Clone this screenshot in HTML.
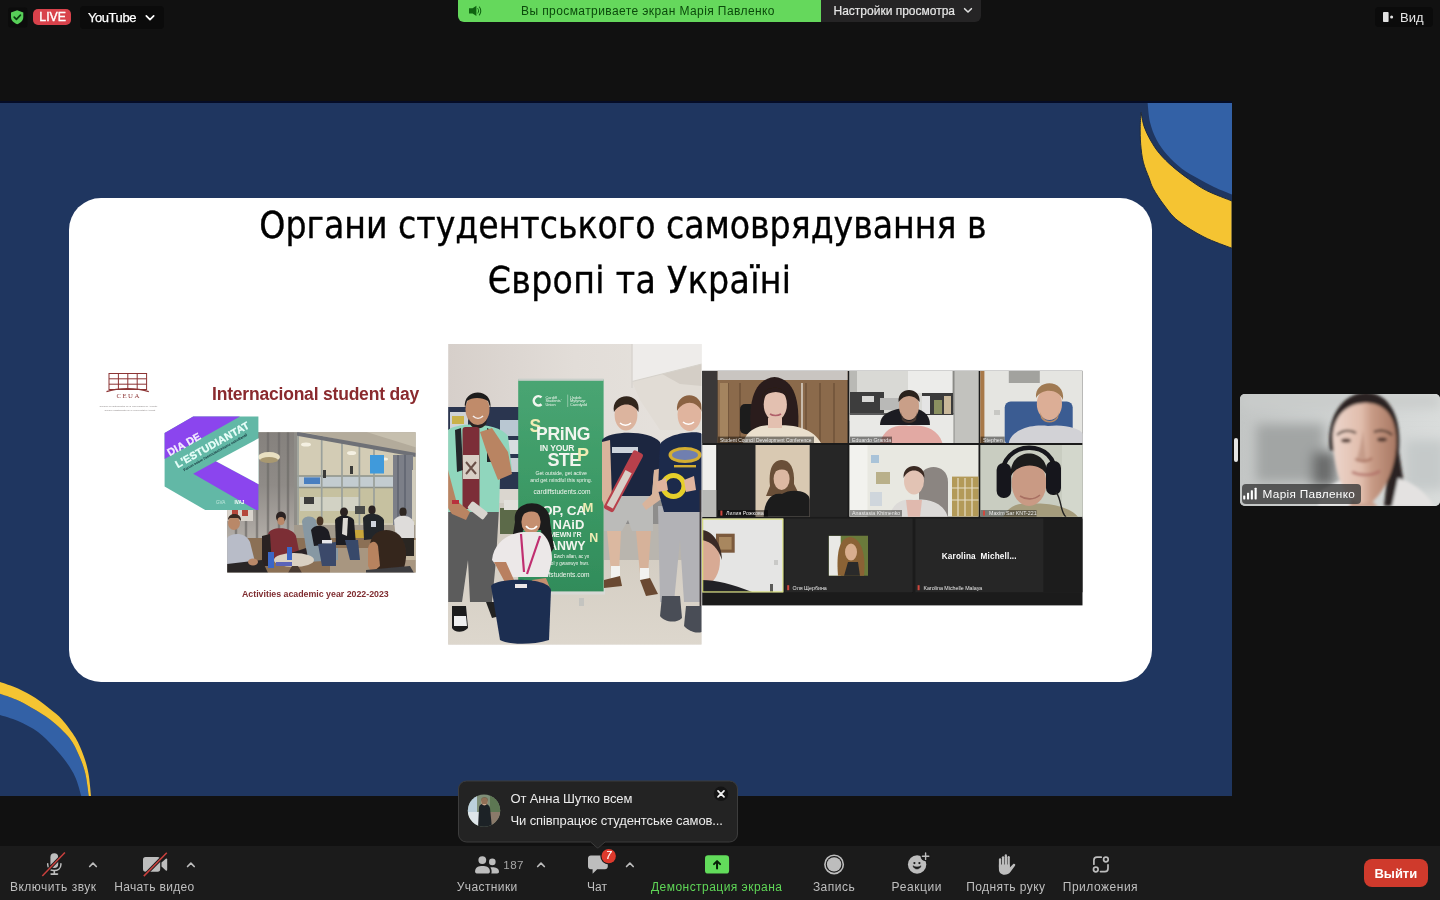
<!DOCTYPE html>
<html lang="ru">
<head>
<meta charset="utf-8">
<title>Zoom</title>
<style>
*{box-sizing:border-box;margin:0;padding:0}
html,body{width:1440px;height:900px;overflow:hidden;background:#111111}
body{position:relative;font-family:"Liberation Sans",sans-serif;color:#fff;-webkit-font-smoothing:antialiased}
.abs{position:absolute}
.t{position:absolute;white-space:nowrap;line-height:1}
/* top bar */
#live{left:33px;top:9px;width:38px;height:16px;border-radius:5px;background:#d8424b}
#ytbox{left:80px;top:6px;width:84px;height:23px;border-radius:4px;background:#0b0b0b}
#sharebar{left:458px;top:0;width:363px;height:22px;background:#65d85c;border-radius:0 0 0 6px}
#viewopt{left:821px;top:0;width:160px;height:22px;background:#252425;border-radius:0 0 6px 0}
#vidbox{left:1375px;top:6.5px;width:58px;height:20.5px;border-radius:4px;background:#0b0b0b}
/* slide */
#slide{left:0;top:103px;width:1232px;height:693px;background:#1f3660;overflow:hidden}
#card{left:69px;top:95.3px;width:1082.6px;height:484px;background:#fff;border-radius:32px}
.title{position:absolute;color:#000;font-family:"DejaVu Sans Condensed","DejaVu Sans",sans-serif;font-size:36.9px;line-height:1;white-space:nowrap;-webkit-text-stroke:.35px #000}
/* toolbar */
#toolbar{left:0;top:846px;width:1440px;height:54px;background:#1b1b1b}
.lbl{position:absolute;top:879.8px;font-size:12px;color:#bfbfbf;white-space:nowrap;line-height:14px;letter-spacing:.2px}
#leave{left:1364px;top:859px;width:64px;height:28px;border-radius:8px;background:#cf3a2c}
/* popup */
#popup{left:458px;top:781px;width:280px;height:61px;border-radius:8px;background:#232323;border:1px solid #3c3c3c}
/* participant */
#pvideo{left:1240px;top:394px;width:199.5px;height:112px;border-radius:5px;background:#c9cccb;overflow:hidden}
#pname{left:1241.7px;top:484.2px;width:119px;height:19.8px;border-radius:4px;background:rgba(58,58,58,.8)}
</style>
</head>
<body>
<div id="root" style="position:absolute;left:0;top:0;width:1440px;height:900px;will-change:transform">

<!-- ===== slide ===== -->
<div class="abs" style="left:0;top:101.4px;width:1232px;height:2px;background:#050c26"></div>
<div id="slide" class="abs">
  <svg class="abs" style="left:0;top:0" width="1232" height="693" viewBox="0 103 1232 693">
    <!-- top-right decoration -->
    <path d="M1147.6 103 C1148.0 106.2 1148.5 116.0 1150 122.2 C1151.5 128.4 1153.8 134.5 1156.7 140 C1159.6 145.5 1163.2 150.4 1167.3 155.1 C1171.4 159.8 1176.5 164.6 1181.6 168.4 C1186.6 172.2 1192.2 175.1 1197.6 178.2 C1203.0 181.3 1208.3 184.3 1214 187 C1219.7 189.7 1229.0 193.2 1232 194.5 L1232 103 Z" fill="#3361a6"/>
    <path d="M1141.1 112.4 C1141.6 114.8 1142.7 122.1 1144.2 126.7 C1145.8 131.3 1147.9 135.6 1150.4 140 C1152.9 144.4 1155.6 148.9 1159.3 153.3 C1163.0 157.8 1167.8 162.4 1172.7 166.7 C1177.6 171.0 1183.1 175.1 1188.7 179.1 C1194.3 183.1 1199.4 186.9 1206.6 190.6 C1213.8 194.2 1227.8 199.3 1232 201 L1232 248.3 C1227.3 246.4 1213.0 241.6 1204 237 C1195.0 232.4 1184.7 226.1 1178 220.8 C1171.3 215.5 1168.1 210.3 1164 205 C1159.9 199.7 1155.8 193.3 1153.3 188.8 C1150.8 184.3 1150.8 182.6 1149.1 178.2 C1147.4 173.8 1144.7 167.8 1143.3 162.2 C1141.9 156.6 1141.2 150.3 1140.7 144.4 C1140.2 138.5 1140.1 132.0 1140.2 126.7 C1140.3 121.4 1140.9 114.8 1141.1 112.4 Z" fill="#f5c432" stroke="#1e2a3e" stroke-width="1" stroke-linejoin="round"/>
    <!-- bottom-left decoration -->
    <path d="M0 693.7 C2.7 694.7 10.7 697.1 16 699.5 C21.3 701.9 26.2 704.6 32 708 C37.8 711.4 44.5 715.0 50.7 720 C56.9 725.0 64.6 731.9 69.3 737.8 C74.0 743.7 76.3 749.6 79 755.5 C81.7 761.4 83.7 766.5 85.3 773.3 C86.9 780.0 88.2 792.2 88.8 796 L81.3 796 C80.3 793.0 78.0 783.3 75.5 777.7 C73.0 772.1 70.3 767.8 66.6 762.6 C62.9 757.4 58.1 751.7 53.3 746.6 C48.5 741.5 43.9 736.3 38 732 C32.1 727.7 24.3 723.8 18 721 C11.7 718.2 3.0 716.0 0 715 Z" fill="#3361a6"/>
    <path d="M0 682 C3.0 683.1 12.1 685.8 18 688.5 C23.9 691.2 30.2 694.6 35.5 698 C40.8 701.4 45.6 705.4 50 709 C54.4 712.6 57.8 714.7 62 719.5 C66.2 724.3 71.9 731.8 75.5 737.8 C79.1 743.8 81.3 749.6 83.5 755.5 C85.7 761.4 87.2 766.5 88.4 773.3 C89.7 780.0 90.6 792.2 91 796 L88.8 796 C88.2 792.2 86.9 780.0 85.3 773.3 C83.7 766.5 81.7 761.4 79 755.5 C76.3 749.6 74.0 743.7 69.3 737.8 C64.6 731.9 56.9 725.0 50.7 720 C44.5 715.0 37.8 711.4 32 708 C26.2 704.6 21.3 701.9 16 699.5 C10.7 697.1 2.7 694.7 0 693.7 Z" fill="#f5c432"/>
  </svg>
  <div id="card" class="abs"></div>

  <!-- ===== left block: CEUA ===== -->
  <svg class="abs" style="left:95px;top:262px" width="340" height="250" viewBox="95 365 340 250">
    <defs>
      <filter id="pb" x="-5%" y="-5%" width="110%" height="110%"><feGaussianBlur stdDeviation="0.7"/></filter>
      <filter id="pb2" x="-5%" y="-5%" width="110%" height="110%"><feGaussianBlur stdDeviation="1.6"/></filter>
      <linearGradient id="curt" x1="0" y1="0" x2="0" y2="1"><stop offset="0" stop-color="#85817d"/><stop offset=".45" stop-color="#8f8b87"/><stop offset="1" stop-color="#b9b4ae"/></linearGradient>
      <clipPath id="cph1"><rect x="227.2" y="432.2" width="188.4" height="140.2"/></clipPath>
    </defs>
    <!-- CEUA building logo -->
    <g fill="none" stroke="#8c3434" stroke-width="1">
      <rect x="109" y="373.5" width="37.6" height="16"/>
      <path d="M118.4 373.5 V389.5 M127.8 373.5 V389.5 M137.2 373.5 V389.5 M109 378.8 H146.6 M109 384.2 H146.6"/>
      <path d="M106.5 391.6 C118 387.6 137 387.6 148.8 391.6" stroke-width="1.2"/>
    </g>
    <!-- photo -->
    <g clip-path="url(#cph1)">
      <rect x="227" y="432" width="189" height="141" fill="#a39a8c"/>
      <g filter="url(#pb)">
        <!-- window wall -->
        <rect x="293" y="430" width="125" height="95" fill="#cdc7b0"/>
        <rect x="296" y="436" width="98" height="40" fill="#d3ccb5"/>
        <rect x="294" y="476" width="100" height="11" fill="#c3ccd0"/>
        <rect x="294" y="487" width="100" height="36" fill="#c6c1a0"/>
        <rect x="300" y="497" width="60" height="14" fill="#d2d2c4"/>
        <path d="M296 476 H393 M296 487.5 H393" stroke="#8d9188" stroke-width="1.3"/>
        <path d="M298 436 V525 M321.7 436 V525 M342 440 V525 M359.4 444 V525 M374 448 V525" stroke="#9aa09b" stroke-width="1.7"/>
        <ellipse cx="306" cy="444.6" rx="5" ry="2" fill="#f4f0e2"/><ellipse cx="351.6" cy="453" rx="4.6" ry="2" fill="#f4f0e2"/><ellipse cx="385" cy="459" rx="3" ry="1.6" fill="#f4f0e2"/>
        <!-- ceiling + beam -->
        <path d="M293 430 H418 V456 Z" fill="#b3ab9b"/>
        <path d="M360 430 H418 V448 Z" fill="#c6bfae"/>
        <path d="M293 433 L416 455" stroke="#6e7076" stroke-width="4" fill="none"/>
        <rect x="291" y="432" width="6" height="93" fill="#8f8d88"/>
        <!-- blue sign -->
        <rect x="370" y="455" width="14" height="18.5" fill="#3f9adb"/>
        <rect x="304" y="477.4" width="16" height="6.6" fill="#4a7fc0"/>
        <!-- small dark things in window -->
        <rect x="304" y="497" width="10" height="7" fill="#3c3e3c"/>
        <rect x="355" y="506" width="10" height="8" fill="#4a4c48"/>
        <rect x="323" y="470" width="3" height="8" fill="#3a3a38"/><rect x="350" y="466" width="3" height="8" fill="#3a3a38"/>
        <!-- curtains -->
        <rect x="227" y="432" width="67" height="118" fill="url(#curt)"/>
        <path d="M236 432 V550 M246 432 V550 M257 432 V550 M268 432 V550 M279 432 V550 M288 432 V550" stroke="#6f6c69" stroke-width="2.4" opacity=".7"/>
        <rect x="393" y="455" width="20" height="70" fill="#7b7f88"/>
        <path d="M398 455 V525 M405 455 V525" stroke="#666a74" stroke-width="2"/>
        <rect x="412" y="470" width="6" height="50" fill="#d2cdbc"/>
        <!-- lamp -->
        <ellipse cx="269" cy="457" rx="11" ry="5" fill="#e9e0c2"/>
        <ellipse cx="269" cy="460" rx="9" ry="3" fill="#a89870"/>
        <!-- floor -->
        <rect x="227" y="538" width="190" height="36" fill="#8b6f55"/>
        <rect x="330" y="548" width="90" height="26" fill="#a89680"/>
        <rect x="396" y="540" width="22" height="20" fill="#c4b79f"/>
        <!-- wall bit lower-left -->
        <rect x="227" y="509" width="26" height="12" fill="#d9d4cc"/>
        <rect x="232" y="510" width="6" height="6" fill="#b4463a"/><rect x="242" y="510" width="6" height="6" fill="#b4463a"/>
        <!-- armchair -->
        <path d="M302 522 C302 516 312 514 316 520 L322 550 L338 548 L338 560 L308 562 Z" fill="#8798a3"/>
        <!-- yellow chairs -->
        <rect x="340" y="530" width="26" height="8" fill="#c9a63a"/>
        <!-- people back row -->
        <ellipse cx="344" cy="512" rx="4" ry="4.6" fill="#2a2420"/>
        <path d="M335 520 C338 514 350 514 354 520 L356 545 L336 545 Z" fill="#1f1f22"/>
        <path d="M343 518 L348 518 L347 536 L342 534 Z" fill="#dcd8d4"/>
        <path d="M345 540 L358 540 L360 560 L350 560 Z" fill="#39496b"/>
        <ellipse cx="372" cy="510" rx="3.6" ry="4.4" fill="#2a2420"/>
        <path d="M363 518 C366 512 380 512 384 520 L384 538 L364 540 Z" fill="#23252b"/>
        <rect x="371" y="521" width="5" height="6" fill="#cfd4dc"/>
        <ellipse cx="403" cy="512" rx="3.6" ry="4.4" fill="#2e2620"/>
        <path d="M394 520 C398 514 410 514 414 522 L414 540 L396 540 Z" fill="#dedcda"/>
        <path d="M396 538 L414 538 L414 556 L400 556 Z" fill="#2a2624"/>
        <!-- woman in black -->
        <ellipse cx="320" cy="521" rx="3.4" ry="4.6" fill="#4a3426"/>
        <path d="M311 530 C314 524 326 524 329 532 L332 544 L314 546 Z" fill="#1d1d20"/>
        <path d="M318 544 L336 542 L336 566 L322 566 Z" fill="#3a4a6a"/>
        <rect x="322" y="540" width="10" height="3.4" fill="#e6e6ea"/>
        <!-- red sweater man -->
        <ellipse cx="281" cy="517" rx="5" ry="5.6" fill="#2c2420"/>
        <ellipse cx="281" cy="521" rx="3.6" ry="4" fill="#b98768"/>
        <path d="M268 534 C270 526 292 526 296 536 L300 556 L270 560 Z" fill="#7b2f36"/>
        <path d="M262 536 L270 534 L272 566 L262 566 Z" fill="#2a2422"/>
        <path d="M282 556 L306 548 L308 558 L284 566 Z" fill="#2a2426"/>
        <!-- left man -->
        <ellipse cx="234" cy="523" rx="6" ry="7" fill="#b98868"/>
        <path d="M228 520 C228 512 242 512 241 521 L238 518 L230 518 Z" fill="#3a2a20"/>
        <path d="M227 538 C232 532 246 532 250 542 L256 566 L227 570 Z" fill="#b8bcc8"/>
        <path d="M227 564 L262 560 L268 573 L227 573 Z" fill="#2a2628"/>
        <ellipse cx="253" cy="562" rx="5" ry="3.4" fill="#b98868"/>
        <!-- table -->
        <ellipse cx="294" cy="560" rx="20" ry="7" fill="#d9d0c2"/>
        <path d="M292 566 L298 566 L302 573 L288 573 Z" fill="#4a3a30"/>
        <rect x="268" y="552" width="6" height="16" fill="#3b66c6"/>
        <rect x="287" y="547" width="5" height="13" fill="#3b66c6"/>
        <rect x="276" y="562" width="16" height="4" fill="#5a63b8"/>
        <!-- foreground man -->
        <path d="M370 546 C370 530 388 526 398 534 C408 542 408 560 402 573 L372 573 Z" fill="#35271f"/>
        <path d="M368 548 C370 540 376 540 378 546 L380 566 L372 573 L368 566 Z" fill="#b8835f"/>
        <path d="M366 570 L410 566 L414 573 L366 573 Z" fill="#3c3c40"/>
      </g>
    </g>
    <!-- DIA DE L'ESTUDIANTAT logo -->
    <g>
      <path d="M164.6 433 L193.2 416.6 L258.4 416.6 L258.4 509.9 L205.2 509.9 L164.6 486.4 Z" fill="#62b8a6"/>
      <path d="M164.6 433 L193.2 416.6 L240 416.6 L164.6 459 Z" fill="#8b45ee"/>
      <path d="M216 461.2 L258.4 484 L258.4 509.9 L256 509.9 L193.2 473.8 Z" fill="#8b45ee"/>
      <path d="M258.6 438.3 L258.6 484.2 L216 461.2 Z" fill="#ffffff"/>
    </g>
  </svg>

  <!-- ===== middle photo ===== -->
  <svg class="abs" style="left:447px;top:240px" width="256" height="303" viewBox="447 343 256 303">
    <defs>
      <clipPath id="cph2"><rect x="448.2" y="344" width="253.3" height="300.4"/></clipPath>
      <linearGradient id="bng" x1="0" y1="0" x2="0" y2="1"><stop offset="0" stop-color="#49a573"/><stop offset=".5" stop-color="#3d9a66"/><stop offset="1" stop-color="#318c5a"/></linearGradient>
      <linearGradient id="wallg" x1="0" y1="0" x2="1" y2="0"><stop offset="0" stop-color="#d6cfca"/><stop offset=".5" stop-color="#e2ddd8"/><stop offset="1" stop-color="#e6e2dd"/></linearGradient>
      <linearGradient id="flr" x1="0" y1="0" x2="0" y2="1"><stop offset="0" stop-color="#cfc8bd"/><stop offset="1" stop-color="#ddd7cd"/></linearGradient>
    </defs>
    <g clip-path="url(#cph2)">
      <rect x="447" y="343" width="256" height="303" fill="url(#wallg)"/>
      <g filter="url(#pb)">
        <!-- right ceiling/wall -->
        <path d="M632 344 H702 V364 L632 381.5 Z" fill="#eeecea"/>
        <path d="M632 381.5 L702 364 V430 H660 L640 400 Z" fill="#e1dcd5"/><path d="M662 374 L702 364 V386 L680 384 Z" fill="#d4cec6"/>
        <path d="M632 381.5 L702 364" stroke="#d6d2cc" stroke-width="1.2"/>
        <path d="M632 344 V388" stroke="#d8d5cf" stroke-width="1.5"/>
        <!-- floor -->
        <rect x="447" y="500" width="256" height="146" fill="url(#flr)"/>
        <rect x="447" y="486" width="256" height="30" fill="#cfcac2"/>
        <path d="M604 520 H702 V560 H604 Z" fill="#b9b5ae"/>
        <path d="M604 500 H702 V524 H604 Z" fill="#8e8d8c"/>
        <!-- notice board -->
        <rect x="448" y="407" width="73" height="82" fill="#2c344f"/>
        <rect x="450" y="412" width="18" height="28" fill="#cfd3d6"/>
        <rect x="452" y="416" width="12" height="8" fill="#c9b24a"/>
        <rect x="500" y="420" width="20" height="16" fill="#b9c7d2"/>
        <rect x="500" y="440" width="20" height="14" fill="#d8dde0"/>
        <rect x="504" y="458" width="16" height="14" fill="#c8ced4"/>
        <rect x="447" y="489" width="74" height="14" fill="#dad6cf"/>
        <!-- plants behind woman -->
        <rect x="500" y="508" width="22" height="26" fill="#5c6b4a"/>
        <rect x="504" y="500" width="16" height="10" fill="#e2e0dc"/>
        <!-- banner -->
        <rect x="548" y="588" width="57" height="6.5" fill="#d9d9d6"/>
        <rect x="518.2" y="379.4" width="85.4" height="212" fill="url(#bng)"/>
        <rect x="518.2" y="378.6" width="85.4" height="2.2" fill="#c9cfca"/>
        <rect x="579" y="598" width="5" height="8" fill="#c4c4c0"/>
        <g font-family="'Liberation Sans',sans-serif" font-weight="bold" fill="#f1f5ee">
          <path d="M541.5 397.4 A4.6 4.6 0 1 0 541.5 404.2" fill="none" stroke="#f1f5ee" stroke-width="2.6"/>
          <text font-size="3.9" font-weight="normal"><tspan x="545.4" y="398.6">Cardiff</tspan><tspan x="545.4" y="402.4">Students'</tspan><tspan x="545.4" y="406.2">Union</tspan></text>
          <rect x="567.6" y="394.6" width=".5" height="12.4" fill="#d6eadc"/>
          <text font-size="3.9" font-weight="normal"><tspan x="570" y="398.6">Undeb</tspan><tspan x="570" y="402.4">Myfyrwyr</tspan><tspan x="570" y="406.2">Caerdydd</tspan></text>
          <text x="529.6" y="432.4" font-size="17.6" fill="#f0ecb4">S</text>
          <text x="536" y="440" font-size="17.6" letter-spacing="-.3">PRiNG</text>
          <text x="539.8" y="450.6" font-size="8.5" letter-spacing="-.1">IN YOUR</text>
          <text x="547.4" y="466.4" font-size="18" letter-spacing="-.6">STE</text>
          <text x="577" y="460.6" font-size="18" fill="#f0ecb4">P</text>
          <text x="561.2" y="474.6" font-size="5.2" font-weight="normal" text-anchor="middle">Get outside, get active</text>
          <text x="561.2" y="481.8" font-size="5.2" font-weight="normal" text-anchor="middle">and get mindful this spring.</text>
          <text x="562" y="493.6" font-size="6.6" font-weight="normal" text-anchor="middle">cardiffstudents.com</text>
          <text x="532.4" y="515.3" font-size="13.6" fill="#f0ecb4">H</text>
          <text x="542" y="515.3" font-size="13.6" letter-spacing="-.2">OP, CA</text>
          <text x="582.6" y="511.6" font-size="13" fill="#f0ecb4">M</text>
          <text x="540" y="528.9" font-size="13">A NAiD</text>
          <text x="549.4" y="537.2" font-size="7" letter-spacing="-.1">MEWN I'R</text>
          <text x="528" y="549.6" font-size="12.4" letter-spacing="-.2">GWANWY</text>
          <text x="589.2" y="541.6" font-size="12.4" fill="#f0ecb4">N</text>
          <text x="589.4" y="558.4" font-size="4.6" font-weight="normal" text-anchor="end">Ewch allan, ac yn</text>
          <text x="589.4" y="564.6" font-size="4.6" font-weight="normal" text-anchor="end">egnïol y gwanwyn hwn.</text>
          <text x="589.6" y="576.8" font-size="6.6" font-weight="normal" text-anchor="end">cardiffstudents.com</text>
        </g>
        <!-- left man -->
        <path d="M448 508 H499 L496 560 L492 602 H470 L468 560 L462 602 H448 Z" fill="#5b5b5c"/>
        <path d="M448 430 C458 422 498 422 508 436 L512 470 L500 478 L499 512 H448 Z" fill="#90d6bd"/>
        <path d="M455 430 L461 428 L463 470 L457 472 Z M487 428 L493 431 L492 462 L487 462 Z" fill="#23262a"/>
        <ellipse cx="477.5" cy="409.6" rx="12" ry="15.4" fill="#c08b6b"/>
        <path d="M465 408 C462 388 493 387 490.4 408 L488 401 C482 397 472 397 467 401 Z" fill="#1d1a1a"/>
        <path d="M468 416 C470 428 486 428 488 416 L486 424 C482 430 473 430 470 424 Z" fill="#2a2220"/>
        <path d="M473 416 C476 419 480 419 483 416" stroke="#f4eeee" stroke-width="1.6" fill="none"/>
        <path d="M480 432 L492 428 L508 452 L512 474 L498 480 L486 450 Z" fill="#b98462"/>
        <rect x="462.5" y="427" width="17" height="82" rx="3" fill="#7c2f37"/>
        <rect x="463" y="455" width="16" height="24" fill="#d9cfc6"/>
        <path d="M466 462 L476 474 M476 462 L466 474" stroke="#6a5048" stroke-width="2"/>
        <path d="M448 470 L456 500 L470 512 L466 520 L452 514 L448 508 Z" fill="#b98462"/>
        <rect x="468" y="506" width="20" height="9" rx="2" transform="rotate(38 478 510)" fill="#d8d4ce"/>
        <rect x="452" y="500" width="7" height="4" fill="#b8323e"/>
        <!-- left shoes -->
        <path d="M452 606 H466 L468 628 C462 634 454 632 452 628 Z" fill="#1c1c1e"/>
        <path d="M454 616 H466 L467 626 H454 Z" fill="#efefef"/>
        <path d="M486 602 H494 L500 616 L492 618 Z" fill="#222"/>
        <!-- woman -->
        <path d="M515 522 C511 498 551 496 550 522 L554 548 L546 560 L541 530 L523 530 L519 558 L511 546 Z" fill="#1f1b1b"/>
        <ellipse cx="531" cy="522" rx="9.6" ry="12" fill="#c58f70"/>
        <path d="M521 516 C524 504 540 504 542 516 C536 510 527 510 521 516 Z" fill="#1f1b1b"/>
        <path d="M526 526 C529 530 534 530 537 526" stroke="#fff" stroke-width="1.6" fill="none"/>
        <path d="M492 560 C494 540 512 532 526 532 L540 532 C548 536 552 548 552 560 L548 577 L512 577 L506 566 L498 568 Z" fill="#ece8e8"/>
        <path d="M521 534 L524 572 M540 536 L527 574" stroke="#c02f6f" stroke-width="2.2" fill="none"/>
        <path d="M494 562 L506 562 L514 580 L536 586 L534 592 L508 588 Z" fill="#b98060"/>
        <path d="M532 580 L546 578 L550 588 L536 592 Z" fill="#c58f70"/>
        <path d="M491 586 C494 578 548 576 551 590 L549 640 C530 646 506 644 500 640 Z" fill="#1f2f51"/>
        <rect x="515" y="584" width="12" height="4" fill="#ece8e8"/>
        <!-- middle man -->
        <path d="M604 492 H653 V531 H632 L628 520 L622 531 H604 Z" fill="#bbbbb9"/>
        <path d="M607 531 H621 L619 572 H611 Z" fill="#dbb8a0"/>
        <path d="M636 531 H651 L648 574 H640 Z" fill="#d6b29a"/>
        <rect x="611" y="566" width="9" height="12" fill="#f2f2f0"/><rect x="640" y="568" width="9" height="12" fill="#f2f2f0"/>
        <path d="M604 580 L620 576 L622 586 L604 588 Z" fill="#6a4a30"/>
        <path d="M640 580 L650 578 L658 594 L646 596 Z" fill="#6a4a30"/>
        <path d="M602 440 C610 430 650 430 660 442 L662 470 L654 472 L652 496 H604 Z" fill="#1f2841"/>
        <path d="M602 442 L610 440 L612 500 L606 510 L602 500 Z" fill="#d9b49c"/>
        <path d="M654 470 L662 468 L660 500 L646 510 L642 504 L652 494 Z" fill="#d9b49c"/>
        <rect x="612" y="447" width="26" height="6" fill="#cdd3dc"/>
        <ellipse cx="626" cy="415" rx="11.4" ry="15.6" fill="#dcb49e"/>
        <path d="M614 412 C610 392 642 390 638.4 412 C633 402 620 402 614 412 Z" fill="#33251f"/>
        <path d="M620 423 C623 426 628 426 631 423" stroke="#fff" stroke-width="1.4" fill="none"/>
        <rect x="618" y="448" width="11" height="66" rx="2.5" transform="rotate(28 623 481)" fill="#b8414b"/>
        <rect x="620" y="470" width="7" height="40" transform="rotate(28 623 481)" fill="#d8cfc8"/>
        <!-- right man -->
        <path d="M658 506 H702 V602 H684 L680 540 L674 602 H660 Z" fill="#b2b2b6"/>
        <path d="M662 596 H680 L682 618 C676 624 664 622 660 616 Z" fill="#4a4e56"/>
        <path d="M686 606 H702 V632 C694 634 688 630 684 626 Z" fill="#4a4e56"/>
        <path d="M660 444 C668 432 700 430 702 434 V512 H664 L658 490 Z" fill="#1e2a4b"/>
        <ellipse cx="689.4" cy="415" rx="11.8" ry="16" fill="#e0b49e"/>
        <path d="M677 411 C675 390 704 390 702 412 C696 400 684 400 677 411 Z" fill="#8b6242"/>
        <path d="M683 422 C686 425 691 425 694 422" stroke="#fff" stroke-width="1.4" fill="none"/>
        <ellipse cx="685" cy="455" rx="16.5" ry="8" fill="#d4ae33"/>
        <ellipse cx="685" cy="455" rx="13" ry="5" fill="#6f7fb0"/>
        <rect x="674" y="465" width="22" height="2.4" fill="#d4ae33"/>
        <circle cx="673.5" cy="486" r="10.5" fill="none" stroke="#e6cf2b" stroke-width="5"/>
        <path d="M656 482 L666 478 L668 490 L658 492 Z M684 480 L694 476 L696 490 L686 492 Z" fill="#e0b49e"/>
        <rect x="699.6" y="490" width="2.2" height="116" fill="#3a3638"/>
      </g>
    </g>
  </svg>

  <!-- ===== zoom grid ===== -->
  <svg class="abs" style="left:701px;top:267px" width="383" height="237" viewBox="701 370 383 237">
    <defs>
      <clipPath id="g11"><rect x="717.6" y="371" width="130" height="72"/></clipPath>
      <clipPath id="g12"><rect x="849.5" y="371" width="129" height="72"/></clipPath>
      <clipPath id="g13"><rect x="980.3" y="371" width="102.2" height="72"/></clipPath>
      <clipPath id="g21"><rect x="755.5" y="445" width="54.2" height="71.7"/></clipPath>
      <clipPath id="g22"><rect x="849.5" y="445" width="129" height="71.7"/></clipPath>
      <clipPath id="g23"><rect x="980.3" y="445" width="102.2" height="71.7"/></clipPath>
      <clipPath id="g31"><rect x="702.2" y="518.6" width="81" height="73.6"/></clipPath>
      <clipPath id="g32"><rect x="828.7" y="535.8" width="39.3" height="40"/></clipPath>
    </defs>
    <rect x="702.2" y="370.8" width="380.3" height="234.6" fill="#1b1b1b"/>
    <g filter="url(#pb)">
      <!-- left strip -->
      <rect x="702.2" y="371" width="15.4" height="72" fill="#3a3838"/>
      <rect x="702.2" y="445" width="14" height="72" fill="#efefec"/>
      <rect x="702.2" y="490" width="14" height="27" fill="#b9b9b6"/>
      <!-- r1 t1 -->
      <g clip-path="url(#g11)">
        <rect x="717" y="371" width="131" height="73" fill="#8b6a4c"/>
        <rect x="717" y="371" width="131" height="9" fill="#c9c5c1"/>
        <path d="M728 383 V443 M740 383 V443 M766 383 V443 M806 383 V443 M820 383 V443 M834 383 V443" stroke="#76583c" stroke-width="2"/>
        <rect x="720" y="383" width="8" height="60" fill="#a4845f"/>
        <path d="M802 383 V443" stroke="#d8d0c4" stroke-width="1.6"/>
        <rect x="740" y="404" width="20" height="30" rx="5" fill="#1d1d1f"/>
        <path d="M751 432 C748 402 754 379 774.6 377 C795 379 800 402 798 430 L790 436 L758 436 Z" fill="#2a1d1a"/>
        <ellipse cx="775.3" cy="404.6" rx="11.6" ry="16" fill="#e3c0b0"/>
        <path d="M762 398 C764 384 786 384 788 398 C782 390 770 390 762 398 Z" fill="#2a1d1a"/>
        <path d="M770 414 C773 416 778 416 781 414" stroke="#b0606a" stroke-width="1.6" fill="none"/>
        <path d="M743 443 C748 426 766 424 775 426 C786 424 812 426 821 443 Z" fill="#eadfcd"/>
        <rect x="768" y="418" width="14" height="10" fill="#e3c0b0"/>
      </g>
      <!-- r1 t2 -->
      <g clip-path="url(#g12)">
        <rect x="849" y="371" width="130" height="73" fill="#d9d9d5"/>
        <rect x="849" y="371" width="8" height="50" fill="#b9b9b5"/>
        <rect x="908" y="371" width="46" height="22" fill="#ececea"/>
        <rect x="954.6" y="371" width="24" height="73" fill="#c2c2be"/>
        <rect x="952.6" y="371" width="2" height="73" fill="#8a8a86"/>
        <rect x="850" y="392" width="34" height="22" fill="#3c3c3e"/>
        <rect x="862" y="396" width="12" height="6" fill="#d8d8d6"/>
        <rect x="880" y="398" width="22" height="12" fill="#b9b9b7"/>
        <rect x="849.5" y="414" width="104" height="30" fill="#e9e9e6"/>
        <rect x="849.5" y="413" width="104" height="2" fill="#5a5a5a"/>
        <rect x="922" y="393" width="31" height="22" fill="#3a3a3a"/>
        <rect x="934" y="400" width="8" height="14" fill="#8a9060"/>
        <rect x="944" y="396" width="7" height="18" fill="#c9b89a"/>
        <rect x="922" y="396" width="8" height="18" fill="#e4e4e4"/>
        <path d="M880 425 C880 412 896 408 909 408 C922 408 930 414 930 425 Z" fill="#1f1f21"/>
        <ellipse cx="909" cy="406" rx="10" ry="14" fill="#c99f88"/>
        <path d="M898.6 402 C897 386 921 386 919.6 402 C914 394 904 394 898.6 402 Z" fill="#2a211d"/>
        <path d="M901 412 C903 424 915 424 917 412 L916 420 C912 424 906 424 902 420 Z" fill="#4a3830"/>
        <path d="M880 443 C884 428 896 424 909 426 C922 424 938 428 942.4 443 Z" fill="#e2a9a3"/>
      </g>
      <!-- r1 t3 -->
      <g clip-path="url(#g13)">
        <rect x="980" y="371" width="103" height="73" fill="#e5e5e1"/>
        <rect x="980" y="371" width="4.4" height="73" fill="#a8794a"/>
        <rect x="1008.8" y="371" width="31" height="12" fill="#a2a29e"/>
        <rect x="994" y="410" width="6" height="5" fill="#c8c8c4"/>
        <rect x="1004.7" y="401.6" width="68" height="44" rx="6" fill="#3b5b92"/>
        <ellipse cx="1049.4" cy="404" rx="12.6" ry="16" fill="#dcae96"/>
        <path d="M1036 398 C1034 378 1066 378 1063 400 C1058 388 1042 388 1036 398 Z" fill="#a07a52"/>
        <path d="M1040 412 C1044 424 1056 424 1059 412 L1058 418 C1054 424 1045 424 1041 418 Z" fill="#b58a68"/>
        <path d="M1008.8 443 C1012 430 1030 424 1048 426 C1064 424 1080 428 1083 434 V443 Z" fill="#d2d2d6"/>
      </g>
      <!-- r2 t1 -->
      <rect x="717.6" y="445" width="130" height="71.7" fill="#282828"/>
      <g clip-path="url(#g21)">
        <rect x="755" y="445" width="56" height="72" fill="#d9c9b2"/>
        <path d="M770 486 C768 464 776 460 782 460 C790 460 795 468 794 484 L800 496 L766 496 Z" fill="#6b5038"/>
        <ellipse cx="781.6" cy="479" rx="8" ry="11" fill="#dcb8a2"/>
        <path d="M772 474 C774 462 790 462 791 474 C786 468 778 468 772 474 Z" fill="#6b5038"/>
        <path d="M763.7 517 C764 500 772 492 782 494 C790 488 810 490 810 500 V517 Z" fill="#1c1c1e"/>
      </g>
      <!-- r2 t2 -->
      <g clip-path="url(#g22)">
        <rect x="849" y="445" width="130" height="72" fill="#e8e8e1"/>
        <rect x="849.5" y="445" width="18" height="72" fill="#f2f2ee"/>
        <rect x="871" y="455" width="8" height="8" fill="#a9c3d8"/>
        <rect x="876" y="472" width="14" height="12" fill="#b9b08a"/>
        <rect x="870" y="492" width="12" height="14" fill="#cfd6dc"/>
        <path d="M919 517 V482 C919 462 948 462 948 482 V517 Z" fill="#8b8581"/>
        <rect x="952" y="476.6" width="27" height="40" fill="#b39a58"/>
        <path d="M958 478 V516 M965 478 V516 M972 478 V516 M952 488 H979 M952 500 H979" stroke="#e6ddc6" stroke-width="1.2"/>
        <ellipse cx="914" cy="481" rx="10" ry="13.6" fill="#e2c3b4"/>
        <path d="M903.6 478 C902 462 926 462 924.4 478 C920 468 908 468 903.6 478 Z" fill="#3a2a24"/>
        <path d="M889.6 517 C892 502 904 498 914 500 C926 498 944 502 947.8 517 Z" fill="#dcdad8"/>
        <path d="M906 500 L922 500 L920 517 L908 517 Z" fill="#e0b9ae"/>
      </g>
      <!-- r2 t3 -->
      <g clip-path="url(#g23)">
        <rect x="980" y="445" width="103" height="72" fill="#c9cdc1"/>
        <rect x="1062" y="445" width="21" height="72" fill="#d3d7cc"/>
        <path d="M1002 478 C1000 438 1058 438 1055 476" fill="none" stroke="#17171a" stroke-width="4.4"/>
        <path d="M1003 517 C1008 506 1020 502 1030 504 C1044 502 1070 506 1078 517 Z" fill="#a59c7c"/>
        <ellipse cx="1029" cy="483" rx="17.4" ry="23" fill="#c99a84"/>
        <path d="M1011 476 C1008 446 1050 446 1047 476 C1042 462 1018 462 1011 476 Z" fill="#1d1a1a"/>
        <path d="M1020 496 C1026 500 1034 500 1040 495" stroke="#a86f62" stroke-width="1.6" fill="none"/>
        <rect x="996.6" y="463" width="14.6" height="35" rx="7" fill="#17171a"/>
        <rect x="1046" y="461" width="15" height="34" rx="7" fill="#17171a"/>
        <path d="M1056 492 C1062 500 1060 512 1066 517" stroke="#222" stroke-width="1.4" fill="none"/>
      </g>
      <!-- r3 t1 -->
      <g clip-path="url(#g31)">
        <rect x="702" y="518" width="82" height="75" fill="#e5e5e4"/>
        <rect x="716" y="533.7" width="18.7" height="19" fill="#7b5a3e"/>
        <rect x="719" y="537" width="12.6" height="12.6" fill="#a8875e"/>
        <rect x="774" y="560" width="4" height="5" fill="#c9c9c7"/>
        <rect x="770" y="584" width="3" height="8" fill="#5a5a58"/>
        <ellipse cx="706" cy="560" rx="14" ry="24" fill="#d8aa94"/>
        <path d="M702 530 C712 530 722 544 722 560 C718 548 712 542 702 540 Z" fill="#3a2c26"/>
        <path d="M702 592 V580 C716 580 732 584 752 592 Z" fill="#232325"/>
      </g>
      <rect x="702.7" y="519.1" width="80.2" height="72.8" fill="none" stroke="#d9e07a" stroke-width="1.1"/>
      <!-- r3 t2 -->
      <rect x="785.3" y="518.6" width="127.3" height="73.6" fill="#272727"/>
      <g clip-path="url(#g32)">
        <rect x="828" y="535" width="41" height="42" fill="#6a7a3a"/>
        <rect x="828.7" y="535.8" width="12" height="40" fill="#e9e9e6"/>
        <path d="M838 576 C836 550 840 538 850 537 C862 538 866 556 864 576 Z" fill="#8a6234"/>
        <ellipse cx="851" cy="552" rx="6" ry="8.6" fill="#d9ae8e"/>
        <path d="M844 576 L860 576 L858 562 L848 562 Z" fill="#2a2a2a"/>
      </g>
      <!-- r3 t3 -->
      <rect x="915.3" y="518.6" width="128.1" height="73.6" fill="#252525"/>
      <rect x="1043.4" y="518.6" width="39.1" height="73.6" fill="#1e1e1e"/>
    </g>
    <!-- labels -->
    <g font-family="'Liberation Sans',sans-serif" fill="#e8e8e8" font-size="5.3">
      <rect x="718" y="436.6" width="96" height="6.4" fill="#000" opacity=".45"/>
      <text x="720" y="441.8" font-size="4.9">Student Council Development Conference</text>
      <rect x="850" y="436.6" width="42" height="6.4" fill="#000" opacity=".45"/>
      <text x="852" y="441.8">Eduardo Granda</text>
      <rect x="980.6" y="436.6" width="24" height="6.4" fill="#000" opacity=".45"/>
      <text x="983" y="441.8">Stephen</text>
      <rect x="718" y="510" width="50" height="6.6" fill="#000" opacity=".45"/>
      <rect x="720.4" y="510.6" width="2" height="5" fill="#d0483e"/>
      <text x="726" y="515.4">Лилия Рожкова</text>
      <rect x="850" y="510" width="52" height="6.6" fill="#000" opacity=".4"/>
      <text x="852" y="515.4">Anastasia Khimenko</text>
      <rect x="980.6" y="510" width="56" height="6.6" fill="#000" opacity=".4"/>
      <rect x="983" y="510.6" width="2" height="5" fill="#d0483e"/>
      <text x="989" y="515.4">Maxim Sar KNT-221</text>
      <rect x="787.2" y="585.2" width="2" height="5" fill="#d0483e"/>
      <text x="792.6" y="589.6">Оля Щербина</text>
      <rect x="917.6" y="585.2" width="2" height="5" fill="#d0483e"/>
      <text x="923.4" y="589.6">Karolina Michelle Malaya</text>
      <text x="941.8" y="558.6" font-size="8.2" font-weight="bold" fill="#fff" letter-spacing=".15" xml:space="preserve">Karolina  Michell...</text>
    </g>
  </svg>
  <div class="t" style="left:116.4px;top:393.2px;margin-top:-103px;font-family:'Liberation Serif',serif;font-size:6.8px;letter-spacing:1.5px;color:#8c3434">CEUA</div>
  <div class="t" style="left:99.5px;top:303.2px;font-size:2.45px;color:#8e8888">Consejo de Estudiantes de la Universidad de Alicante</div>
  <div class="t" style="left:104.5px;top:307.4px;font-size:2.45px;color:#8e8888">Consell d'Estudiants de la Universitat d'Alacant</div>
  <div class="t" style="left:212px;top:283.4px;font-size:17.5px;font-weight:bold;color:#8a2a2e;letter-spacing:-.2px">Internacional student day</div>
  <div class="t" style="left:242px;top:486.5px;font-size:8.8px;font-weight:bold;color:#7f2c30">Activities academic year 2022-2023</div>
  <div class="t" style="left:170.6px;top:345.4px;font-size:10.4px;font-weight:bold;color:#f3ecff;transform-origin:0 100%;transform:rotate(-29.4deg);letter-spacing:.3px;-webkit-text-stroke:.3px #f3ecff">DIA DE</div>
  <div class="t" style="left:179px;top:356.6px;font-size:10.4px;font-weight:bold;color:#e9fffa;transform-origin:0 100%;transform:rotate(-29.4deg);letter-spacing:.2px;-webkit-text-stroke:.3px #e9fffa">L'ESTUDIANTAT</div>
  <div class="t" style="left:184.5px;top:366px;font-size:3.6px;font-weight:bold;color:#15323a;transform-origin:0 100%;transform:rotate(-29.4deg)">Fòrum sobre l'associacionisme estudiantil</div>
  <div class="t" style="left:234.5px;top:398.2px;font-size:4.6px;font-weight:bold;color:#fff">IVAJ</div>
  <div class="t" style="left:216px;top:398.2px;font-size:4.6px;color:#bfe6dc">GVA</div>
  <div class="title" style="left:259.3px;top:105px">Органи студентського самоврядування в</div>
  <div class="title" style="left:487.7px;top:160px;letter-spacing:.36px">Європі та Україні</div>
</div>

<!-- ===== top bar ===== -->
<div id="live" class="abs"></div>
<div class="t" style="left:39.3px;top:10.6px;font-size:12.3px;color:#fff;-webkit-text-stroke:.35px #fff">LIVE</div>
<div id="ytbox" class="abs"></div>
<div class="t" style="left:88px;top:11px;font-size:13px;color:#fff;letter-spacing:-.45px;-webkit-text-stroke:.25px #fff">YouTube</div>
<div id="sharebar" class="abs"></div>
<div class="t" style="left:521px;top:4.6px;font-size:12px;letter-spacing:.41px;color:#0b4a0b">Вы просматриваете экран Марія Павленко</div>
<div id="viewopt" class="abs"></div>
<div class="t" style="left:833.5px;top:4.6px;font-size:12px;color:#e6e6e6;-webkit-text-stroke:.2px #e6e6e6">Настройки просмотра</div>
<div id="vidbox" class="abs"></div>
<div class="t" style="left:1400px;top:11px;font-size:13px;color:#e6e6e6">Вид</div>
<svg class="abs" style="left:0;top:0" width="1440" height="40" viewBox="0 0 1440 40">
  <rect x="8" y="7.5" width="19.5" height="20" rx="3" fill="#0c0c0c"/>
  <!-- shield -->
  <path d="M17.2 10.3 L23.3 12.6 V17 C23.3 20.6 20.6 23 17.2 24.2 C13.8 23 11 20.6 11 17 V12.6 Z" fill="#57cf58"/>
  <path d="M14.2 17.2 L16.4 19.3 L20.4 15.2" fill="none" stroke="#0b3d10" stroke-width="1.7" stroke-linecap="round" stroke-linejoin="round"/>
  <!-- youtube chevron -->
  <path d="M146.3 15.8 L150 19.6 L153.7 15.8" fill="none" stroke="#fff" stroke-width="1.7" stroke-linecap="round" stroke-linejoin="round"/>
  <!-- speaker -->
  <path d="M469 8.3 H472.6 L476.4 5.7 V15.9 L472.6 13.6 H469 Z" fill="#0f6410"/>
  <path d="M477.9 8.6 C478.9 9.8 478.9 11.9 477.9 13.1" fill="none" stroke="#0f6410" stroke-width="1" stroke-linecap="round"/>
  <path d="M479.4 7 C481.2 9 481.2 12.8 479.4 14.8" fill="none" stroke="#0f6410" stroke-width="1.1" stroke-linecap="round"/>
  <!-- view options chevron -->
  <path d="M964.6 8.7 L968 12 L971.4 8.7" fill="none" stroke="#e0e0e0" stroke-width="1.6" stroke-linecap="round" stroke-linejoin="round"/>
  <!-- view icon -->
  <rect x="1383" y="12" width="5.6" height="10" rx="0.8" fill="#e2e2e2"/>
  <circle cx="1391.6" cy="17" r="1.5" fill="#e2e2e2"/>
</svg>

<!-- ===== participant video ===== -->
<div id="pvideo" class="abs">
<svg width="200" height="112" viewBox="1240 394 200 112" style="position:absolute;left:0;top:0">
  <defs>
    <filter id="b3" x="-20%" y="-20%" width="140%" height="140%"><feGaussianBlur stdDeviation="3"/></filter>
    <filter id="b15" x="-20%" y="-20%" width="140%" height="140%"><feGaussianBlur stdDeviation="1.4"/></filter>
    <filter id="b6" x="-30%" y="-30%" width="160%" height="160%"><feGaussianBlur stdDeviation="6"/></filter>
    <linearGradient id="skin" x1="0" y1="0" x2="1" y2="0"><stop offset="0" stop-color="#ecd6cc"/><stop offset=".45" stop-color="#e0bcab"/><stop offset=".62" stop-color="#c79a85"/><stop offset="1" stop-color="#a87863"/></linearGradient>
    <linearGradient id="pbg" x1="0" y1="0" x2="1" y2="0"><stop offset="0" stop-color="#c3c6c5"/><stop offset=".5" stop-color="#cfd2d1"/><stop offset="1" stop-color="#d9dcdb"/></linearGradient>
  </defs>
  <rect x="1240" y="394" width="200" height="112" fill="url(#pbg)"/>
  <g filter="url(#b6)">
    <rect x="1256" y="424" width="68" height="58" fill="#a2a5a4"/>
    <rect x="1312" y="452" width="24" height="34" fill="#6b6c6c"/>
    <rect x="1240" y="394" width="200" height="14" fill="#c9cccb"/>
    <rect x="1405" y="440" width="40" height="50" fill="#c5c9c9"/>
  </g>
  <g filter="url(#b15)">
    <!-- hair -->
    <path d="M1330 450 C1326 420 1340 394 1366 392 C1392 394 1402 420 1399 452 L1403 478 C1408 490 1404 500 1398 506 L1384 506 L1388 470 Z" fill="#2b2420"/>
    <!-- shirt -->
    <path d="M1398 478 C1412 482 1426 492 1434 506 L1392 506 Z" fill="#e4e2e1"/>
    <path d="M1322 490 L1345 478 L1352 506 L1318 506 Z" fill="#e9e8e7"/>
    <!-- face -->
    <path d="M1333 440 C1332 418 1345 403 1366 403 C1387 403 1398 420 1396 446 C1395 470 1384 492 1372 502 C1366 506 1358 506 1352 500 C1340 488 1334 466 1333 440 Z" fill="url(#skin)"/>
    <path d="M1352 499 C1358 505 1366 505 1372 501 L1378 507 L1349 507 Z" fill="#c9a08e"/>
    <path d="M1363 430 C1361 445 1358 455 1356 461 L1366 463 Z" fill="#a97a66" opacity=".45"/>
    <!-- brows / eyes -->
    <path d="M1337 435 C1343 430 1350 430 1356 433" stroke="#3a2a22" stroke-width="2" fill="none"/>
    <path d="M1374 432 C1381 429 1388 431 1392 435" stroke="#3a2a22" stroke-width="2" fill="none"/>
    <ellipse cx="1346" cy="440.5" rx="5" ry="2" fill="#4a332b"/>
    <ellipse cx="1382" cy="439.5" rx="5" ry="2" fill="#4a332b"/>
    <path d="M1355 459 C1360 462 1368 462 1372 458" stroke="#a8705f" stroke-width="2" fill="none"/>
    <path d="M1352 472 C1360 476 1372 476 1380 471" stroke="#b06d66" stroke-width="2.4" fill="none"/>
  </g>
</svg>
</div>
<div id="pname" class="abs"></div>
<svg class="abs" style="left:1240px;top:480px" width="24" height="24" viewBox="1240 480 24 24">
  <rect x="1243.2" y="495.4" width="2.1" height="4" rx=".6" fill="#fff"/>
  <rect x="1247" y="492.8" width="2.1" height="6.6" rx=".6" fill="#fff"/>
  <rect x="1250.8" y="490.2" width="2.1" height="9.2" rx=".6" fill="#fff"/>
  <rect x="1254.6" y="487.7" width="2.1" height="11.7" rx=".6" fill="#fff"/>
</svg>
<div class="t" style="left:1262.5px;top:488.8px;font-size:11.8px;letter-spacing:.32px;color:#fff">Марія Павленко</div>
<!-- resize handle -->
<div class="abs" style="left:1234px;top:438px;width:4px;height:24px;border-radius:2px;background:#e4e4e4"></div>

<!-- ===== toolbar ===== -->
<div id="toolbar" class="abs"></div>
<svg class="abs" style="left:0;top:846px" width="1440" height="54" viewBox="0 846 1440 54">
  <g fill="#bdbdbd" stroke="none">
    <!-- mic -->
    <rect x="50.4" y="853.3" width="7.8" height="14.6" rx="3.9"/>
    <path d="M47.7 863.8 V864.6 C47.7 872.6 60.9 872.6 60.9 864.6 V863.8" fill="none" stroke="#bdbdbd" stroke-width="1.5" stroke-linecap="round"/>
    <rect x="53.5" y="870.4" width="1.6" height="3.6"/>
    <rect x="50.3" y="873.3" width="8" height="1.6" rx=".8"/>
    <!-- camera -->
    <rect x="143" y="857.1" width="17.2" height="14.6" rx="2.6"/>
    <path d="M161.5 862.6 L165.8 858.7 C166.4 858.2 167.2 858.6 167.2 859.4 V869.8 C167.2 870.6 166.4 871 165.8 870.5 L161.5 866.6 Z"/>
    <!-- participants -->
    <circle cx="482.3" cy="860.1" r="3.9"/>
    <path d="M475.1 871.4 C475.1 866.9 478.8 865.9 482.5 865.9 C486.2 865.9 489.9 866.9 489.9 871.4 C489.9 872.9 488.9 873.5 487.6 873.5 H477.4 C476.1 873.5 475.1 872.9 475.1 871.4 Z"/>
    <circle cx="492.3" cy="861.9" r="3.3"/>
    <path d="M491.3 873.5 C491.5 872.9 491.6 872.2 491.6 871.4 C491.6 869.6 491 868.3 490.3 867.6 C490.9 867.4 491.6 867.3 492.4 867.3 C495.6 867.3 499 868.4 499 871.8 C499 872.9 498.2 873.5 497.2 873.5 Z"/>
    <!-- chat -->
    <path d="M590.8 855.5 H605 C606.6 855.5 607.8 856.7 607.8 858.3 V866.5 C607.8 868.1 606.6 869.3 605 869.3 H597.2 L592.6 873.8 V869.3 H590.8 C589.2 869.3 588 868.1 588 866.5 V858.3 C588 856.7 589.2 855.5 590.8 855.5 Z"/>
    <!-- record -->
    <circle cx="834.1" cy="864.4" r="9.2" fill="none" stroke="#bdbdbd" stroke-width="1.6"/>
    <circle cx="834.1" cy="864.4" r="7.2"/>
    <!-- reactions -->
    <circle cx="917.1" cy="864.5" r="9.2"/>
    <!-- hand -->
    <rect x="998.9" y="858.3" width="2.3" height="10" rx="1.15"/>
    <rect x="1001.9" y="856.2" width="2.3" height="12" rx="1.15"/>
    <rect x="1004.7" y="854.3" width="2.3" height="14" rx="1.15"/>
    <rect x="1007.5" y="856.1" width="2.3" height="12" rx="1.15"/>
    <path d="M998.9 864.6 H1009.8 V867.6 L1013 864.2 C1014.2 863.1 1016 864.4 1015 865.8 L1010.4 872 C1009 873.8 1007 874.7 1004.6 874.7 C1001.2 874.7 998.9 872.4 998.9 869.2 Z"/>
  </g>
  <!-- slashes -->
  <path d="M42.3 875.9 L64.9 852.6" stroke="#1b1b1b" stroke-width="3.4"/>
  <path d="M42.3 875.9 L64.9 852.6" stroke="#c9403d" stroke-width="1.5"/>
  <path d="M143.8 876.1 L166.8 852.7" stroke="#1b1b1b" stroke-width="3.4"/>
  <path d="M143.8 876.1 L166.8 852.7" stroke="#c9403d" stroke-width="1.5"/>
  <!-- chevrons -->
  <g fill="none" stroke="#bdbdbd" stroke-width="1.7" stroke-linecap="round" stroke-linejoin="round">
    <path d="M89.7 866.5 L93.0 863.2 L96.3 866.5"/>
    <path d="M187.6 866.5 L190.9 863.2 L194.2 866.5"/>
    <path d="M537.7 866.5 L541.0 863.2 L544.3 866.5"/>
    <path d="M626.6 866.5 L629.9 863.2 L633.2 866.5"/>
    <!-- apps -->
    <path d="M1101.2 857.2 H1097 C1095.1 857.2 1093.9 858.4 1093.9 860.3 V864.2"/>
    <path d="M1108 864.8 V868.5 C1108 870.4 1106.8 871.6 1104.9 871.6 H1100.5"/>
    <circle cx="1105.9" cy="859.5" r="2.3"/>
    <circle cx="1095.8" cy="869.5" r="2.3"/>
  </g>
  <!-- reactions details -->
  <circle cx="925.6" cy="856.2" r="5" fill="#1b1b1b"/>
  <path d="M925.6 853 V859.4 M922.4 856.2 H928.8" stroke="#bdbdbd" stroke-width="1.4" stroke-linecap="round"/>
  <circle cx="914.4" cy="863.1" r="1.1" fill="#1b1b1b"/>
  <circle cx="919.4" cy="863.1" r="1.1" fill="#1b1b1b"/>
  <path d="M913 865.8 C914 870 920 870 921 865.8 C919 867.4 915 867.4 913 865.8 Z" fill="#1b1b1b" stroke="#1b1b1b" stroke-width=".6" stroke-linejoin="round"/>
  <!-- share -->
  <rect x="705" y="855.2" width="24.1" height="18.4" rx="3.2" fill="#62dc5b"/>
  <path d="M717.05 868.6 V861.6 M714 864.1 L717.05 861.1 L720.1 864.1" fill="none" stroke="#071f06" stroke-width="2" stroke-linecap="round" stroke-linejoin="round"/>
  <!-- badge -->
  <circle cx="608.7" cy="856.1" r="8.4" fill="#1b1b1b"/>
  <circle cx="608.7" cy="856.1" r="7.2" fill="#de3a2d"/>
</svg>
<div class="t" style="left:606.1px;top:851.2px;font-size:10px;font-style:italic;color:#fff;-webkit-text-stroke:.2px #fff">7</div>
<div class="lbl" style="left:9.9px;letter-spacing:0.51px">Включить звук</div>
<div class="lbl" style="left:114.2px;letter-spacing:0.35px">Начать видео</div>
<div class="lbl" style="left:456.8px;letter-spacing:0.4px">Участники</div>
<div class="lbl" style="left:587px;letter-spacing:0px">Чат</div>
<div class="lbl" style="left:651px;letter-spacing:0.46px;color:#5fd657">Демонстрация экрана</div>
<div class="lbl" style="left:812.9px;letter-spacing:0.48px">Запись</div>
<div class="lbl" style="left:891.6px;letter-spacing:0.6px">Реакции</div>
<div class="lbl" style="left:966.2px;letter-spacing:0.42px">Поднять руку</div>
<div class="lbl" style="left:1062.8px;letter-spacing:0.51px">Приложения</div>
<div class="t" style="left:503.3px;top:859.2px;font-size:11.6px;color:#a6a6a6;letter-spacing:.45px">187</div>
<div id="leave" class="abs"></div>
<div class="t" style="left:1374.4px;top:867.2px;font-size:13px;font-weight:bold;color:#fff">Выйти</div>

<!-- ===== chat popup ===== -->
<svg class="abs" style="left:450px;top:775px" width="300" height="80" viewBox="450 775 300 80">
  <defs><clipPath id="av"><circle cx="484" cy="810.6" r="16.2"/></clipPath></defs>
  <path d="M466.5 781 H729.5 A8 8 0 0 1 737.5 789 V834 A8 8 0 0 1 729.5 842 H605 L598.6 847.6 Q597.8 848.3 597 847.6 L590.6 842 H466.5 A8 8 0 0 1 458.5 834 V789 A8 8 0 0 1 466.5 781 Z" fill="#232323" stroke="#3d3d3d" stroke-width="1"/>
  <g clip-path="url(#av)">
    <rect x="467" y="794" width="34" height="34" fill="#7f8f78"/>
    <g filter="url(#pb)">
      <rect x="467" y="794" width="10" height="34" fill="#bcd0dc"/>
      <rect x="467" y="812" width="12" height="16" fill="#dfe6ea"/>
      <rect x="490" y="794" width="12" height="20" fill="#5d7752"/>
      <rect x="488" y="812" width="14" height="16" fill="#8a7a6a"/>
      <path d="M478 828 L479 808 C479 802 489 802 490 808 L492 828 Z" fill="#1f2226"/>
      <ellipse cx="484.4" cy="801.6" rx="3.2" ry="3.8" fill="#c9a58c"/>
      <path d="M481 800 C481 796 488 796 488 800 L487 804 L482 804 Z" fill="#6a4c34" opacity=".6"/>
    </g>
  </g>
  <circle cx="721" cy="793.8" r="7.2" fill="#141414"/>
  <path d="M718 790.8 L724 796.8 M724 790.8 L718 796.8" stroke="#f2f2f2" stroke-width="1.7" stroke-linecap="round"/>
</svg>
<div class="t" style="left:510.4px;top:792px;font-size:13px;letter-spacing:-.12px;color:#ececec">От Анна Шутко всем</div>
<div class="t" style="left:510.4px;top:814px;font-size:13px;letter-spacing:-.1px;color:#ececec">Чи співпрацює студентське самов...</div>

</div>
</body>
</html>
